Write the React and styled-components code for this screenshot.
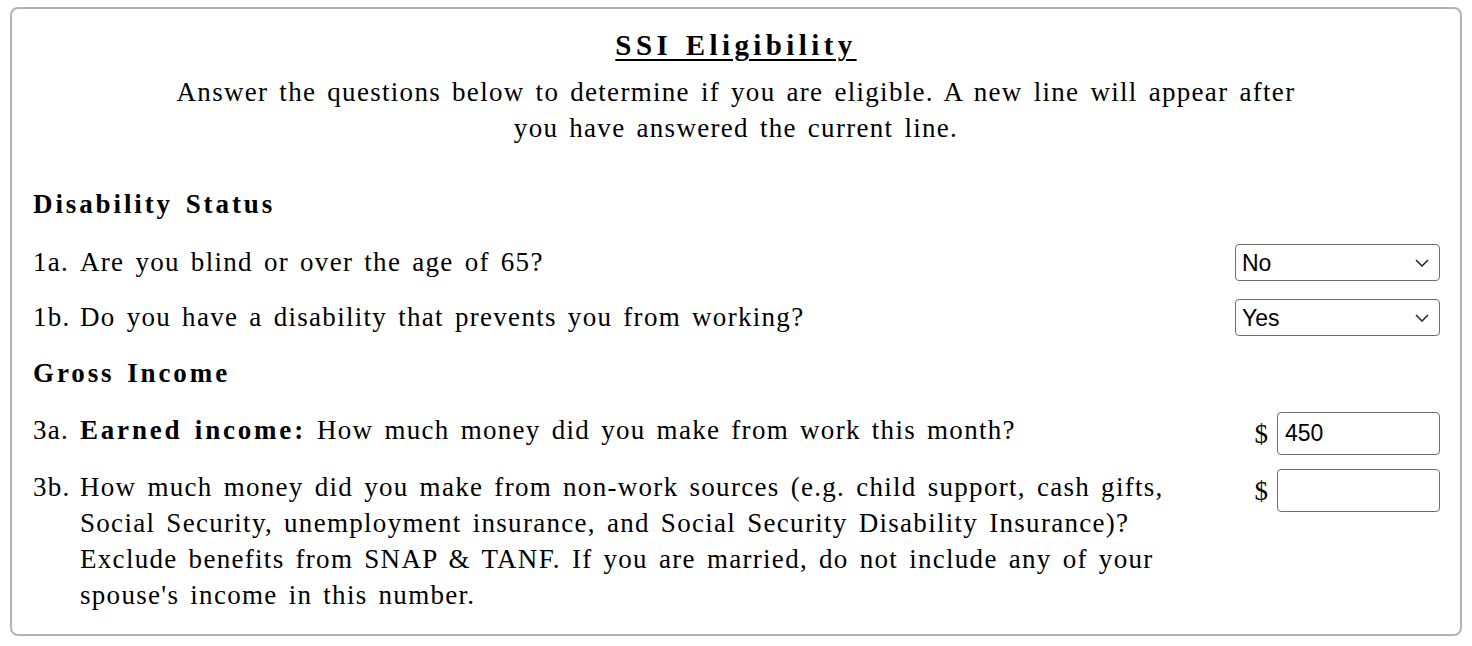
import React, {useState} from 'react';
import styled, {createGlobalStyle} from 'styled-components';

const GlobalStyle = createGlobalStyle`
  body {
    margin: 0;
    background: #fff;
    color: #000;
    font-family: "Liberation Serif", "DejaVu Serif", serif;
  }
`;

const Page = styled.div`
  padding: 7px 10px;
`;

const Card = styled.div`
  box-sizing: border-box;
  height: 629px;
  border: 2px solid #b3b3b3;
  border-radius: 8px;
  padding: 14px 21px 0 21px;
  font-size: 27px;
  line-height: 36px;
  letter-spacing: 1.3px;
  word-spacing: 3px;

  b {
    letter-spacing: 2.8px;
  }
`;

const Title = styled.h2`
  margin: 0;
  text-align: center;
  font-size: 29px;
  line-height: 44px;
  font-weight: bold;
  letter-spacing: 4.4px;
  word-spacing: 2px;
  text-decoration: underline;
  text-underline-offset: 4px;
  text-decoration-thickness: 2px;
`;

const Intro = styled.p`
  margin: 7px auto 40px;
  max-width: 1130px;
  text-align: center;
`;

const SectionHeading = styled.h3`
  margin: 0 0 ${(p) => p.$after}px;
  font-size: 27px;
  line-height: 36px;
  font-weight: bold;
  letter-spacing: 2.9px;
`;

const Row = styled.div`
  display: flex;
  justify-content: space-between;
  align-items: flex-start;
  margin-bottom: ${(p) => p.$after}px;
`;

const Question = styled.div`
  display: flex;
  max-width: 1140px;
`;

const Num = styled.span`
  flex: none;
  width: 47px;
`;

const Label = styled.span`
  flex: 1;
`;

const Control = styled.div`
  flex: none;
  display: flex;
  align-items: center;
  gap: 9px;
  margin-right: -1px;
`;

const Select = styled.select`
  appearance: none;
  box-sizing: border-box;
  width: 205px;
  height: 37px;
  padding: 0 30px 0 6px;
  border: 1.5px solid #6e6e6e;
  border-radius: 4px;
  background: #fff url("data:image/svg+xml;utf8,<svg xmlns='http://www.w3.org/2000/svg' width='14' height='8' viewBox='0 0 14 8'><path d='M1 1l6 6 6-6' fill='none' stroke='%23222' stroke-width='1.5'/></svg>") no-repeat right 10px center;
  font-family: "Liberation Sans", Arial, sans-serif;
  font-size: 23px;
  letter-spacing: 0;
  word-spacing: 0;
  color: #000;
`;

const Dollar = styled.span`
  letter-spacing: 0;
`;

const MoneyInput = styled.input`
  box-sizing: border-box;
  width: 163px;
  height: 43px;
  padding: 0 7px;
  border: 1.5px solid #6e6e6e;
  border-radius: 4px;
  font-family: "Liberation Sans", Arial, sans-serif;
  font-size: 23px;
  letter-spacing: 0;
  word-spacing: 0;
  color: #000;
`;

export default function App() {
  const [blind, setBlind] = useState('No');
  const [disabled, setDisabled] = useState('Yes');
  const [earned, setEarned] = useState('450');
  const [other, setOther] = useState('');

  return (
    <Page>
      <GlobalStyle />
      <Card>
        <Title>SSI Eligibility</Title>
        <Intro>
          Answer the questions below to determine if you are eligible. A new line will appear after
          you have answered the current line.
        </Intro>

        <SectionHeading $after={22}>Disability Status</SectionHeading>
        <Row $after={18}>
          <Question>
            <Num>1a.</Num>
            <Label>Are you blind or over the age of 65?</Label>
          </Question>
          <Control>
            <Select value={blind} onChange={(e) => setBlind(e.target.value)}>
              <option>No</option>
              <option>Yes</option>
            </Select>
          </Control>
        </Row>
        <Row $after={19}>
          <Question>
            <Num>1b.</Num>
            <Label>Do you have a disability that prevents you from working?</Label>
          </Question>
          <Control>
            <Select value={disabled} onChange={(e) => setDisabled(e.target.value)}>
              <option>No</option>
              <option>Yes</option>
            </Select>
          </Control>
        </Row>

        <SectionHeading $after={21}>Gross Income</SectionHeading>
        <Row $after={14}>
          <Question>
            <Num>3a.</Num>
            <Label><b>Earned income:</b> How much money did you make from work this month?</Label>
          </Question>
          <Control>
            <Dollar>$</Dollar>
            <MoneyInput value={earned} onChange={(e) => setEarned(e.target.value)} />
          </Control>
        </Row>
        <Row $after={0}>
          <Question>
            <Num>3b.</Num>
            <Label>
              How much money did you make from non-work sources (e.g. child support, cash gifts,
              Social Security, unemployment insurance, and Social Security Disability Insurance)?
              Exclude benefits from SNAP &amp; TANF. If you are married, do not include any of your
              spouse's income in this number.
            </Label>
          </Question>
          <Control>
            <Dollar>$</Dollar>
            <MoneyInput value={other} onChange={(e) => setOther(e.target.value)} />
          </Control>
        </Row>
      </Card>
    </Page>
  );
}
